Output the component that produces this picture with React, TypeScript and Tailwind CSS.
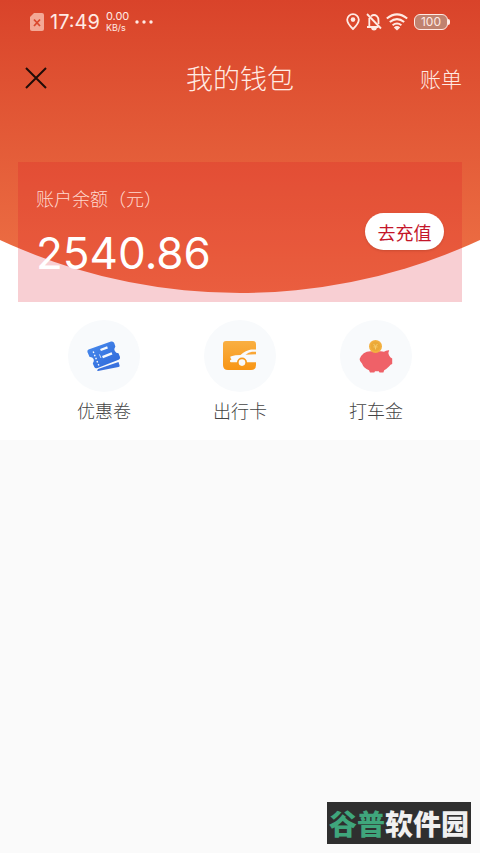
import React from "react";

const TicketIcon: React.FC = () => (
  <svg viewBox="0 0 36 36" className="h-9 w-9" aria-hidden="true">
    <defs>
      <linearGradient id="ticket" x1="0" y1="0" x2="1" y2="1">
        <stop offset="0" stopColor="#4a8cee" />
        <stop offset="1" stopColor="#2c66d8" />
      </linearGradient>
    </defs>
    <path d="M12 31 L32.5 24 L33.6 27.5 Q34 28.8 32.5 29 L12 33 Q10.5 33 12 31Z" fill="#3a72de" />
    <path
      d="M2.5 11.5 L25 3.6 Q27.4 3 28.2 5 L29.4 8.5 Q27.8 10.5 28.8 13 Q30 15.2 32.5 15.2 L34 19 Q34.4 21 32.6 21.8 L11 30.2 Q9 30.7 8.2 28.7 L6.8 25.5 Q8.6 23.5 7.6 21 Q6.4 18.8 3.6 19 L1.4 14 Q1 12.2 2.5 11.5Z"
      fill="url(#ticket)"
    />
    <path d="M7.2 13.5 L13 28" stroke="#f8fafc" strokeWidth="1.4" strokeDasharray="1.6 1.8" />
    <path d="M14.5 12 L21.5 9.4 M16.5 19.2 L26 15.4" stroke="#f8fafc" strokeWidth="2.4" />
    <path d="M13.4 16.4 L15 20" stroke="#f8fafc" strokeWidth="0.8" />
  </svg>
);

const CarCardIcon: React.FC = () => (
  <svg viewBox="0 0 36 36" className="h-9 w-9" aria-hidden="true">
    <defs>
      <linearGradient id="car" x1="0" y1="0" x2="0" y2="1">
        <stop offset="0" stopColor="#f9b247" />
        <stop offset="1" stopColor="#f8920f" />
      </linearGradient>
      <clipPath id="cardShape">
        <path d="M4 3 H31 Q34 3 34 6 V27 Q34 32 29 32 H6 Q1 32 1 27 V6 Q1 3 4 3Z" />
      </clipPath>
    </defs>
    <g clipPath="url(#cardShape)">
      <rect width="36" height="36" fill="url(#car)" />
      <path d="M8.5 18.4 Q13 17 18.5 17 Q24 12.4 29 11.6 L36 11.4 V24.2 H9 Q7.8 24 8 22.5 L9.5 21.2 Q8 20 8.5 18.4Z" fill="#f8fafc" />
      <path d="M23.5 16.8 Q26.5 14.2 30 13.8 L36 13.6 V16.2Z" fill="#f9a636" />
    </g>
    <circle cx="20" cy="24.6" r="5" fill="#f89a1c" />
    <circle cx="20" cy="24.6" r="3.3" fill="#f8fafc" />
  </svg>
);

const PiggyIcon: React.FC = () => (
  <svg viewBox="0 0 36 36" className="h-9 w-9" aria-hidden="true">
    <path
      d="M1.6 21 Q4.5 13.4 12.5 13.2 H22 Q24 13 26 13.8 Q28 12 31.2 12.2 Q29.6 15.2 31 17.2 Q32 19.5 34.2 20.4 V26 Q32.5 26.4 31 28.6 Q28.5 31.2 26.2 32.2 L25.4 34.6 H21.5 L20.8 33.2 H17 L16.3 34.6 H12 L11 32.2 Q5.5 30 4 25.4 Q1.6 23.8 1.6 21Z"
      fill="#ef6168"
    />
    <circle cx="17.5" cy="8.4" r="6.5" fill="#f3b040" />
    <circle cx="17.5" cy="8.4" r="4.8" fill="#eba937" />
    <path d="M15.5 5.9 L17.5 8.4 L19.5 5.9 M17.5 8.4 V11.4 M15.5 8.9 H19.5" stroke="#f7cb6c" strokeWidth="1" fill="none" />
  </svg>
);

const shortcuts: Array<{ label: string; icon: React.FC }> = [
  { label: "优惠卷", icon: TicketIcon },
  { label: "出行卡", icon: CarCardIcon },
  { label: "打车金", icon: PiggyIcon },
];

const StatusBar: React.FC = () => (
  <div className="flex h-10 items-center justify-between px-[30px] pt-1 font-['Inter','Liberation_Sans',sans-serif] text-[#ffeae4]">
    <div className="flex items-center">
      <svg viewBox="0 0 14 18" className="h-[18px] w-3.5" aria-hidden="true">
        <path d="M4 0 H12 Q14 0 14 2 V16 Q14 18 12 18 H2 Q0 18 0 16 V4Z" fill="#f3a896" />
        <path d="M4 6.5 L10 13 M10 6.5 L4 13" stroke="#d9472d" strokeWidth="1.8" />
      </svg>
      <span className="ml-1.5 text-[20px] leading-5">17:49</span>
      <span className="ml-1.5 flex flex-col text-[11px] leading-[11px]">
        <span>0.00</span>
        <span className="text-[9px]">KB/s</span>
      </span>
      <svg viewBox="0 0 18 4" className="ml-1.5 h-1 w-[18px]" fill="currentColor" aria-hidden="true">
        <circle cx="2" cy="2" r="1.7" />
        <circle cx="9" cy="2" r="1.7" />
        <circle cx="16" cy="2" r="1.7" />
      </svg>
    </div>
    <div className="flex items-center">
      <svg viewBox="0 0 14 18" className="h-[18px] w-3.5" fill="none" stroke="currentColor" strokeWidth="1.8" aria-hidden="true">
        <path d="M7 16 Q1.2 10.5 1.2 6.8 A5.8 5.6 0 0 1 12.8 6.8 Q12.8 10.5 7 16Z" />
        <circle cx="7" cy="6.6" r="2.3" fill="currentColor" stroke="none" />
      </svg>
      <svg viewBox="0 0 16 18" className="ml-1.5 h-[18px] w-4" fill="none" stroke="currentColor" strokeWidth="1.8" aria-hidden="true">
        <path d="M5 3.2 Q8 0.8 11 3.2 Q12.5 4.5 12.5 8 V11 M3.3 5 V13.8 M1 14 H12.5" />
        <path d="M1 1 L15 15.5" />
        <path d="M5 15 H11 Q10.4 17.6 8 17.6 Q5.6 17.6 5 15Z" fill="currentColor" stroke="none" />
      </svg>
      <svg viewBox="0 0 22 18" className="ml-1 h-[18px] w-[22px]" fill="none" stroke="currentColor" strokeWidth="2" aria-hidden="true">
        <path d="M0.8 5.6 Q11 -2.8 21.2 5.6 M3.8 9 Q11 3.2 18.2 9 M6.6 12.2 Q11 8.8 15.4 12.2" />
        <path d="M7.8 14.4 Q11 11.8 14.2 14.4 L11 17.6Z" fill="currentColor" stroke="none" />
      </svg>
      <span className="ml-1.5 flex h-4 w-[34px] items-center justify-center rounded-md border border-current bg-[#c0826f] text-[12px] leading-3">
        100
      </span>
      <span className="h-1.5 w-0.5 rounded-r-sm bg-current" />
    </div>
  </div>
);

const App: React.FC = () => {
  return (
    <div className="relative min-h-screen bg-[#fafafa] font-['Noto_Sans_CJK_SC',sans-serif]">
      <div className="relative isolate bg-white pb-[17px]">
        {/* curved header backdrop */}
        <div className="absolute inset-x-0 top-0 -z-10 h-[293px] bg-linear-to-b from-[#d9432a] to-[#ee7246] [clip-path:ellipse(118.75%_570px_at_50%_-277px)]" />

        <StatusBar />

        <header className="grid h-[76px] grid-cols-3 items-center px-[18px] text-[#ffebe4]">
          <button type="button" aria-label="关闭" className="flex h-9 w-9 items-center justify-center">
            <svg viewBox="0 0 22 22" className="h-[22px] w-[22px]" stroke="#200c08" strokeWidth="2" aria-hidden="true">
              <path d="M1 1 L21 21 M21 1 L1 21" />
            </svg>
          </button>
          <h1 className="text-center text-[27px] leading-9 font-light whitespace-nowrap">我的钱包</h1>
          <a href="#bill" className="justify-self-end text-[21px] leading-8 font-light">
            账单
          </a>
        </header>

        <section className="mx-[18px] mt-[46px] flex h-[140px] justify-between bg-[#dc0f23]/20 px-[18px]">
          <div>
            <p className="mt-[23px] text-[18px] leading-[26px] font-light text-[#ffd9cf]">账户余额（元）</p>
            <p className="mt-4 font-['Inter','Liberation_Sans',sans-serif] text-[44px] leading-[52px] text-white">2540.86</p>
          </div>
          <button
            type="button"
            className="mt-[51px] h-[37px] w-[79px] rounded-full bg-white text-[18px] leading-6 text-[#c4162a] shadow-sm"
          >
            去充值
          </button>
        </section>

        <nav className="mt-[18px] grid grid-cols-3 px-9">
          {shortcuts.map(({ label, icon: Icon }) => (
            <a key={label} href="#shortcut" className="flex flex-col items-center">
              <span className="flex h-[72px] w-[72px] items-center justify-center rounded-full bg-[#f8fafc]">
                <Icon />
              </span>
              <span className="mt-[5px] text-[18px] leading-[26px] font-light text-[#444]">{label}</span>
            </a>
          ))}
        </nav>
      </div>

      <div className="absolute right-[9px] bottom-[9px] flex h-[42px] w-36 items-center justify-center bg-[#2f2f2f] text-[28px] leading-10 font-black whitespace-nowrap text-[#f0f0f0]">
        <span className="text-[#3fa67c]">谷普</span>软件园
      </div>
    </div>
  );
};

export default App;
